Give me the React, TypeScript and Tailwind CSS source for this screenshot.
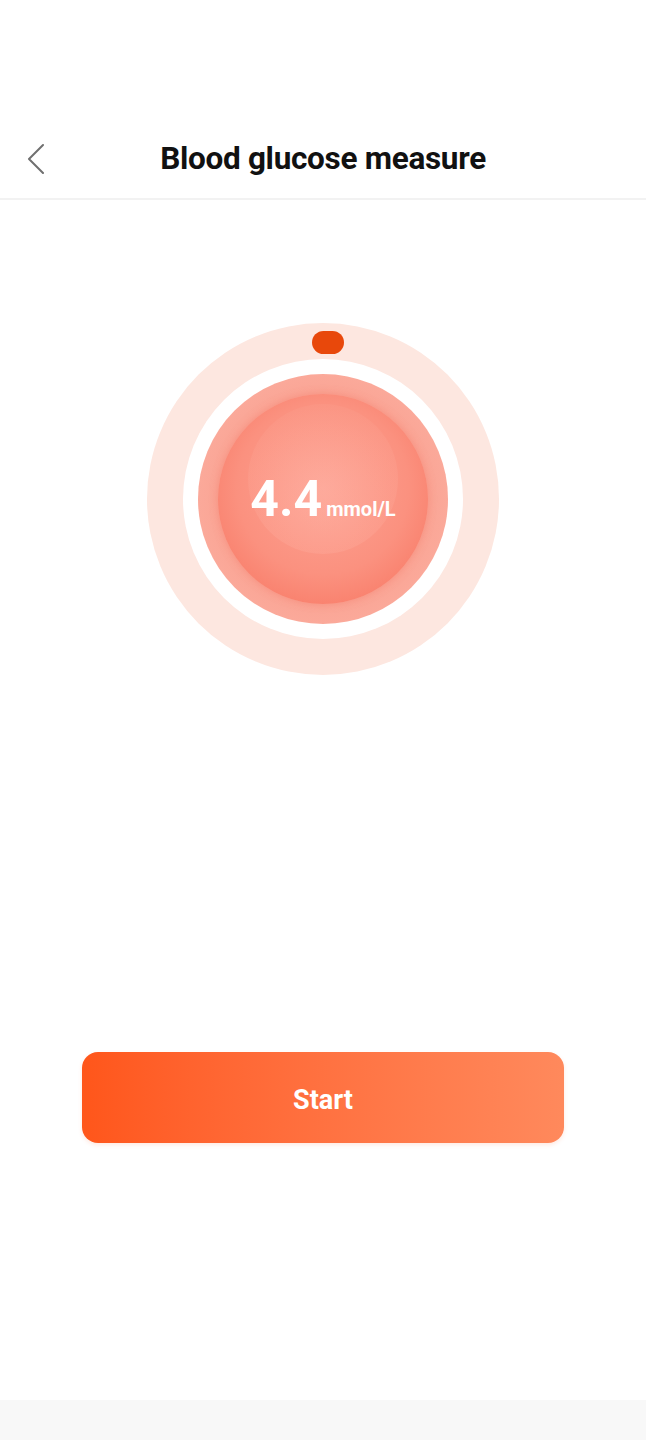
export default function App() {
  return (
    <div className="flex h-[1440px] w-full flex-col bg-white font-['Roboto','Liberation_Sans',sans-serif]">
      {/* status bar space */}
      <div className="h-[118px] shrink-0" />

      {/* Header */}
      <header className="relative flex h-[82px] shrink-0 items-center justify-center border-b-2 border-[#f2f2f2]">
        <button className="absolute left-[24px] top-[24px]">
          <svg width="24" height="32" viewBox="0 0 24 32" fill="none">
            <polyline points="19,3 5,17 19,31" stroke="#707070" strokeWidth="2" strokeLinecap="round" strokeLinejoin="round" />
          </svg>
        </button>
        <h1 className="pt-[2px] text-[31.5px] font-bold tracking-[-0.3px] text-[#111]">Blood glucose measure</h1>
      </header>

      {/* Gauge */}
      <div className="mt-[123px] flex justify-center">
        <div className="relative flex h-[352px] w-[352px] items-center justify-center rounded-full bg-[#fde7e0]">
          <div className="absolute left-[165px] top-[8px] h-[23px] w-[32px] rounded-full bg-[#e8480b]" />
          <div className="flex h-[280px] w-[280px] items-center justify-center rounded-full bg-white">
            <div className="flex h-[250px] w-[250px] items-center justify-center rounded-full bg-[radial-gradient(circle,#f8907e_0%,#fbab9c_76%,#fdc8bd_100%)]">
              <div className="relative flex h-[210px] w-[210px] items-center justify-center overflow-hidden rounded-full bg-[radial-gradient(circle_at_50%_45%,#fda394_0%,#fb917f_55%,#f7705b_100%)] shadow-[0_0_8px_rgba(240,100,80,.35)]">
                <div className="absolute left-[30px] top-[10px] h-[150px] w-[150px] rounded-full bg-[radial-gradient(circle_at_50%_65%,rgba(255,185,172,.35)_0%,rgba(255,180,165,.15)_70%,rgba(255,180,165,0)_100%)]" />
                <div className="relative flex items-baseline text-white">
                  <span className="text-[50px] font-bold leading-none">4.4</span>
                  <span className="ml-[4px] text-[20px] font-bold leading-none">mmol/L</span>
                </div>
              </div>
            </div>
          </div>
        </div>
      </div>

      {/* Action */}
      <div className="mt-[377px] flex justify-center">
        <button className="flex h-[91px] w-[482px] items-center justify-center rounded-[16px] bg-gradient-to-r from-[#ff561a] to-[#ff895c] pt-[5px] text-[27px] font-bold text-white shadow-[0_2px_4px_rgba(255,110,60,.15)]">
          Start
        </button>
      </div>

      <div className="flex-1" />
      <div className="h-[40px] shrink-0 bg-[#f8f8f8]" />
    </div>
  );
}
